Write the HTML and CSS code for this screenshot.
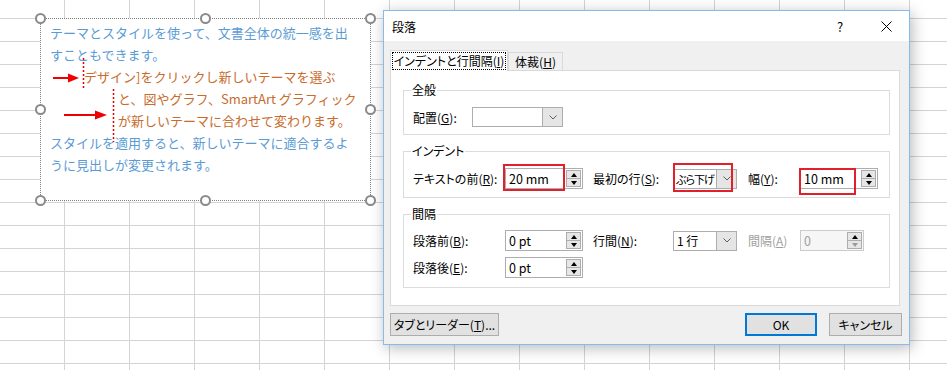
FILE: index.html
```html
<!DOCTYPE html>
<html lang="ja">
  <head>
    <meta charset="UTF-8" />
    <title>段落</title>
    <link rel="stylesheet" href="styles.css">
  </head>
  <body>
    <!-- Zone de texte sur la feuille -->
    <div class="shape">
      <p class="para blue">テーマとスタイルを使って、文書全体の統一感を出<br>すこともできます。</p>
      <p class="para orange hang">デザイン]をクリックし新しいテーマを選ぶ<br>と、図やグラフ、SmartArt グラフィック<br>が新しいテーマに合わせて変わります。</p>
      <p class="para blue">スタイルを適用すると、新しいテーマに適合するよ<br>うに見出しが変更されます。</p>
      <span class="handle tl"></span>
      <span class="handle tc"></span>
      <span class="handle tr"></span>
      <span class="handle ml"></span>
      <span class="handle mr"></span>
      <span class="handle bl"></span>
      <span class="handle bc"></span>
      <span class="handle br"></span>
    </div>

    <!-- Boîte de dialogue -->
    <div class="dialog">
      <div class="titlebar">
        <span class="title">段落</span>
        <span class="tb-btn">?</span>
        <span class="tb-btn">
          <svg width="11" height="11" viewBox="0 0 11 11"><path d="M0.5 0.5L10.5 10.5M10.5 0.5L0.5 10.5" stroke="#000" stroke-width="1" fill="none"/></svg>
        </span>
      </div>

      <div class="dlg-body">
        <div class="tabs">
          <div class="tab active"><span class="focus">インデントと行間隔(<u>I</u>)</span></div>
          <div class="tab">体裁(<u>H</u>)</div>
        </div>

        <div class="panel">
          <fieldset class="group">
            <legend>全般</legend>
            <div class="row">
              <span class="lbl-align">配置(<u>G</u>):</span>
              <div class="combo combo-wide">
                <span class="combo-text"></span>
                <span class="drop"><svg width="8" height="5" viewBox="0 0 8 5"><polyline points="0.5,0.5 4,4 7.5,0.5" fill="none" stroke="#606060"/></svg></span>
              </div>
            </div>
          </fieldset>

          <fieldset class="group">
            <legend>インデント</legend>
            <div class="grid">
              <span>テキストの前(<u>R</u>):</span>
              <div class="num">
                <span class="num-text">20 mm</span>
                <span class="spin"><span class="up"></span><span class="down"></span></span>
              </div>
              <span class="lbl2">最初の行(<u>S</u>):</span>
              <div class="combo">
                <span class="combo-text tight">ぶら下げ</span>
                <span class="drop"><svg width="8" height="5" viewBox="0 0 8 5"><polyline points="0.5,0.5 4,4 7.5,0.5" fill="none" stroke="#606060"/></svg></span>
              </div>
              <span class="lbl3">幅(<u>Y</u>):</span>
              <div class="num">
                <span class="num-text">10 mm</span>
                <span class="spin"><span class="up"></span><span class="down"></span></span>
              </div>
            </div>
          </fieldset>

          <fieldset class="group">
            <legend>間隔</legend>
            <div class="grid">
              <span>段落前(<u>B</u>):</span>
              <div class="num">
                <span class="num-text">0 pt</span>
                <span class="spin"><span class="up"></span><span class="down"></span></span>
              </div>
              <span class="lbl2">行間(<u>N</u>):</span>
              <div class="combo">
                <span class="combo-text">1 行</span>
                <span class="drop"><svg width="8" height="5" viewBox="0 0 8 5"><polyline points="0.5,0.5 4,4 7.5,0.5" fill="none" stroke="#606060"/></svg></span>
              </div>
              <span class="lbl3 disabled">間隔(<u>A</u>)</span>
              <div class="num num-off">
                <span class="num-text">0</span>
                <span class="spin"><span class="up"></span><span class="down"></span></span>
              </div>

              <span>段落後(<u>E</u>):</span>
              <div class="num">
                <span class="num-text">0 pt</span>
                <span class="spin"><span class="up"></span><span class="down"></span></span>
              </div>
            </div>
          </fieldset>
        </div>

        <div class="footer">
          <span class="btn btn-tabs">タブとリーダー(<u>T</u>)...</span>
          <span class="btn btn-ok">OK</span>
          <span class="btn btn-cancel">キャンセル</span>
        </div>
      </div>
    </div>

    <!-- Annotations rouges -->
    <svg class="marks" width="947" height="370" viewBox="0 0 947 370">
      <line x1="83.5" y1="58" x2="83.5" y2="90" stroke="#e00000" stroke-width="1.5" stroke-dasharray="2 2"/>
      <line x1="113.5" y1="89" x2="113.5" y2="142" stroke="#e00000" stroke-width="1.5" stroke-dasharray="2 2"/>
      <line x1="53" y1="78" x2="70" y2="78" stroke="#f00000" stroke-width="2"/>
      <polygon points="68,73.5 79,78 68,82.5" fill="#f00000"/>
      <line x1="64" y1="115" x2="97" y2="115" stroke="#f00000" stroke-width="2"/>
      <polygon points="95,110.5 107,115 95,119.5" fill="#f00000"/>
      <rect x="504" y="165" width="60" height="25" fill="none" stroke="#e0202a" stroke-width="2"/>
      <rect x="674" y="164" width="58" height="27" fill="none" stroke="#e0202a" stroke-width="2"/>
      <rect x="800" y="169" width="55" height="25" fill="none" stroke="#e0202a" stroke-width="2"/>
    </svg>
  </body>
</html>
```

FILE: styles.css
```css
/* Feuille de calcul */
body {
  margin: 0;
  width: 947px;
  height: 370px;
  overflow: hidden;
  position: relative;
  font-family: "Noto Sans CJK JP", "Noto Sans", sans-serif;
  font-size: 12px;
  color: #000000;
  background-color: #ffffff;
  background-image: linear-gradient(90deg, #d4d4d4 1px, transparent 1px),
    linear-gradient(180deg, #d4d4d4 1px, transparent 1px);
  background-size: 65px 100%, 100% 23px;
  background-position: 64px 0, 0 18px;
}

/* Zone de texte */
.shape {
  position: absolute;
  left: 40px;
  top: 18px;
  width: 331px;
  height: 183px;
  box-sizing: border-box;
  border: 1px dotted #808080;
  background: #ffffff;
  padding: 3px 9px 0;
  font-size: 13px;
  line-height: 22px;
  white-space: nowrap;
}

.para {
  margin: 0;
}

.blue {
  color: #5b9bd5;
}

.orange {
  color: #c96b2c;
}

.hang {
  margin-left: 68px;
  text-indent: -34px;
}

.handle {
  position: absolute;
  width: 11px;
  height: 11px;
  box-sizing: border-box;
  border: 2px solid #8a8a8a;
  border-radius: 50%;
  background: #ffffff;
}

.tl { left: -6px; top: -6px; }
.tc { left: calc(50% - 5.5px); top: -6px; }
.tr { right: -6px; top: -6px; }
.ml { left: -6px; top: calc(50% - 5.5px); }
.mr { right: -6px; top: calc(50% - 5.5px); }
.bl { left: -6px; bottom: -6px; }
.bc { left: calc(50% - 5.5px); bottom: -6px; }
.br { right: -6px; bottom: -6px; }

/* Fenêtre */
.dialog {
  position: absolute;
  left: 383px;
  top: 10px;
  width: 527px;
  height: 335px;
  box-sizing: border-box;
  border: 1px solid #86bbec;
  background: #f0f0f0;
  box-shadow: 2px 3px 14px rgba(0, 0, 0, 0.28);
  display: flex;
  flex-direction: column;
  font-feature-settings: "palt";
}

.titlebar {
  height: 30px;
  background: #ffffff;
  display: flex;
  align-items: center;
}

.title {
  flex: 1;
  padding-left: 8px;
}

.tb-btn {
  width: 46px;
  height: 30px;
  display: flex;
  align-items: center;
  justify-content: center;
  font-size: 13px;
}

.dlg-body {
  flex: 1;
  padding: 9px 8px 8px 6px;
  display: flex;
  flex-direction: column;
}

/* Onglets */
.tabs {
  display: flex;
  align-items: flex-end;
  height: 20px;
  position: relative;
  z-index: 1;
}

.tab {
  width: 55px;
  height: 18px;
  box-sizing: border-box;
  border: 1px solid #d9d9d9;
  border-bottom: none;
  background: #f0f0f0;
  text-align: center;
  line-height: 17px;
}

.tab.active {
  width: 118px;
  height: 21px;
  margin-bottom: -1px;
  padding: 1px 1px 0;
  background: #ffffff;
}

.focus {
  display: block;
  height: 18px;
  box-sizing: border-box;
  border: 1px dotted #000000;
  line-height: 16px;
  white-space: nowrap;
}

.panel {
  width: 510px;
  height: 236px;
  box-sizing: border-box;
  border: 1px solid #d9d9d9;
  background: #ffffff;
  padding: 12px 9px 0 12px;
}

/* Groupes */
.group {
  margin: 0;
  min-width: 0;
  border: 1px solid #dcdcdc;
  padding: 10px 8px 7px 9px;
}

.group + .group {
  margin-top: 9px;
  padding-bottom: 8px;
}

.group:last-child {
  padding-top: 9px;
  padding-bottom: 9px;
}

.group legend {
  padding: 0 1px;
  margin-left: -2px;
  line-height: 14px;
}

.row {
  display: flex;
  align-items: center;
  height: 20px;
}

.lbl-align {
  width: 59px;
}

.grid {
  display: grid;
  grid-template-columns: 92px 78px 90px 64px 63px 78px;
  row-gap: 6px;
  align-items: center;
  white-space: nowrap;
}

.lbl2 {
  padding-left: 10px;
}

.lbl3 {
  padding-left: 11px;
}

.disabled {
  color: #a0a0a0;
}

/* Champs */
.combo {
  width: 64px;
  height: 20px;
  box-sizing: border-box;
  border: 1px solid #adadad;
  background: #ffffff;
  display: flex;
}

.combo-wide {
  width: 91px;
}

.combo-text {
  flex: 1;
  min-width: 0;
  overflow: hidden;
  white-space: nowrap;
  padding-left: 3px;
  line-height: 18px;
}

.tight {
  padding-left: 2px;
  font-size: 11px;
  letter-spacing: -1px;
}

.drop {
  width: 19px;
  flex-shrink: 0;
  background: #e5e5e5;
  border-left: 1px solid #adadad;
  display: flex;
  align-items: center;
  justify-content: center;
}

.num {
  width: 78px;
  height: 21px;
  box-sizing: border-box;
  border: 1px solid #abadb3;
  background: #ffffff;
  display: flex;
  font-size: 12.5px;
}

.num-off {
  width: 64px;
  border-color: #cccccc;
  background: #f6f6f6;
  color: #a0a0a0;
}

.num-text {
  flex: 1;
  padding-left: 3px;
  line-height: 19px;
}

.spin {
  width: 15px;
  padding: 1px 1px 1px 0;
  display: flex;
  flex-direction: column;
}

.spin span {
  flex: 1;
  border: 1px solid #adadad;
  background: #e6e6e6;
  display: flex;
  align-items: center;
  justify-content: center;
}

.spin .down {
  border-top: none;
}

.up::before {
  content: "";
  border-left: 3.5px solid transparent;
  border-right: 3.5px solid transparent;
  border-bottom: 4px solid #000000;
}

.down::before {
  content: "";
  border-left: 3.5px solid transparent;
  border-right: 3.5px solid transparent;
  border-top: 4px solid #000000;
}

.num-off .down::before {
  border-top-color: #9a9a9a;
}

/* Boutons du bas */
.footer {
  margin-top: 7px;
  width: 512px;
  height: 23px;
  display: flex;
}

.btn {
  height: 23px;
  box-sizing: border-box;
  border: 1px solid #adadad;
  background: #e1e1e1;
  display: flex;
  align-items: center;
  justify-content: center;
}

.btn-tabs {
  width: 109px;
  margin-right: auto;
}

.btn-ok {
  width: 72px;
  border: 2px solid #0078d7;
}

.btn-cancel {
  width: 73px;
  margin-left: 12px;
}

/* Annotations */
.marks {
  position: absolute;
  left: 0;
  top: 0;
  pointer-events: none;
}
```
